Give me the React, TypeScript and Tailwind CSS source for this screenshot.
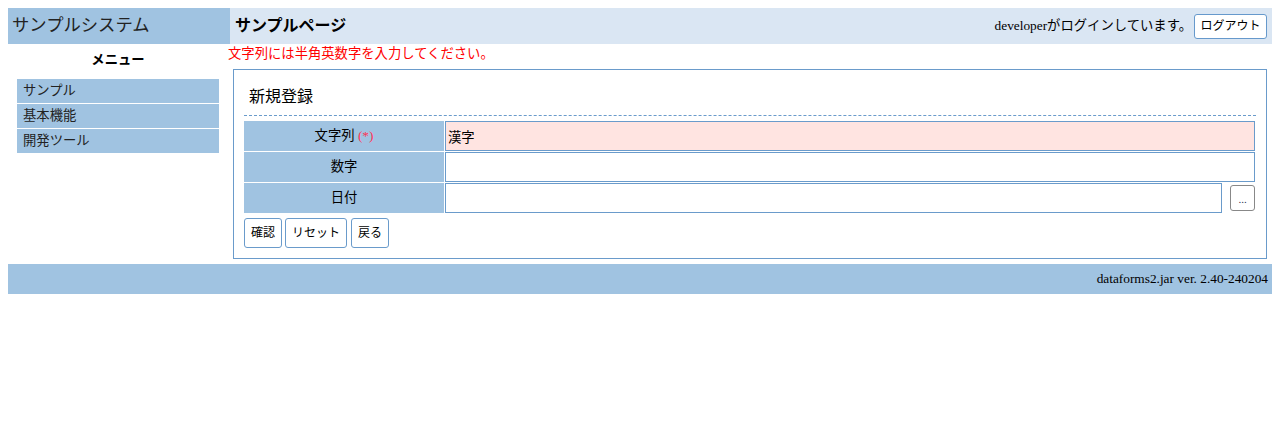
import React from 'react';

const menuItems = ['サンプル', '基本機能', '開発ツール'];

const App: React.FC = () => {
  return (
    <div
      className="p-2 text-[13.33px] text-black bg-white"
      style={{ fontFamily: '"Liberation Serif", "Noto Sans CJK JP", serif' }}
    >
      {/* Header */}
      <div className="flex h-9">
        <div className="w-[222px] bg-[#a0c3e1] flex items-center pl-1 text-[17.33px] text-[#222]">
          サンプルシステム
        </div>
        <div className="flex-1 bg-[#dae6f3] flex items-center justify-between pl-[5px] pr-[5px]">
          <span className="text-[16px] font-bold">サンプルページ</span>
          <div className="flex items-center">
            <span>developerがログインしています。</span>
            <button className="ml-[2px] h-[25px] w-[73px] bg-white border border-[#6699cc] rounded-[3px] text-[12px]">
              ログアウト
            </button>
          </div>
        </div>
      </div>

      {/* Body */}
      <div className="flex">
        {/* Side menu */}
        <div className="w-[220px] shrink-0">
          <div className="mt-[6px] leading-[19px] text-center font-bold">メニュー</div>
          <div className="mt-[10px] mx-[9px]">
            {menuItems.map((item) => (
              <div key={item} className="h-[24px] mb-[1px] bg-[#a0c3e1] pl-[6px] flex items-center text-[#222]">
                {item}
              </div>
            ))}
          </div>
        </div>

        {/* Main */}
        <div className="flex-1">
          <div className="leading-[19px] text-[#ff0000]">文字列には半角英数字を入力してください。</div>
          <div className="mt-[6px] mx-[5px] border border-[#6a9bcb] px-[10px] pt-[15px] pb-[10px]">
            <div className="border-b border-dashed border-[#6a9bcb] pb-[6px]">
              <div className="text-[16px] leading-[24px] pl-[5px]">新規登録</div>
            </div>

            <div className="mt-[5px] flex flex-col gap-[1px]">
              <div className="flex gap-[1px] h-[30px]">
                <div className="w-[200px] bg-[#a0c3e1] flex items-center justify-center">
                  文字列&nbsp;<span className="text-[#ff3355]">(*)</span>
                </div>
                <input
                  readOnly
                  defaultValue="漢字"
                  className="flex-1 min-w-0 h-full mr-[1px] border border-[#6a9bcb] bg-[#ffe4e1] px-[2px] text-[13.33px] outline-none"
                />
              </div>
              <div className="flex gap-[1px] h-[30px]">
                <div className="w-[200px] bg-[#a0c3e1] flex items-center justify-center">数字</div>
                <input readOnly className="flex-1 min-w-0 h-full mr-[1px] border border-[#6a9bcb] bg-white px-[2px] outline-none" />
              </div>
              <div className="flex gap-[1px] h-[30px] items-center">
                <div className="w-[200px] h-full bg-[#a0c3e1] flex items-center justify-center">日付</div>
                <input readOnly className="flex-1 min-w-0 h-full border border-[#6a9bcb] bg-white px-[2px] outline-none" />
                <button className="ml-[7px] mr-[1px] w-[25px] h-[26px] border border-[#888] rounded-[3px] bg-white text-[11px] text-[#335] leading-none pt-[3px]">
                  ...
                </button>
              </div>
            </div>

            <div className="mt-[5px] flex gap-[3px] text-[12px]">
              <button className="h-[30px] w-[38px] border border-[#6a9bcb] rounded-[3px] bg-white">確認</button>
              <button className="h-[30px] w-[62px] border border-[#6a9bcb] rounded-[3px] bg-white">リセット</button>
              <button className="ml-[1px] h-[30px] w-[38px] border border-[#6a9bcb] rounded-[3px] bg-white">戻る</button>
            </div>
          </div>
        </div>
      </div>

      {/* Footer */}
      <div className="mt-[5px] h-[30px] bg-[#a0c3e1] flex items-center justify-end pr-[4px]">
        dataforms2.jar ver. 2.40-240204
      </div>
    </div>
  );
};

export default App;
